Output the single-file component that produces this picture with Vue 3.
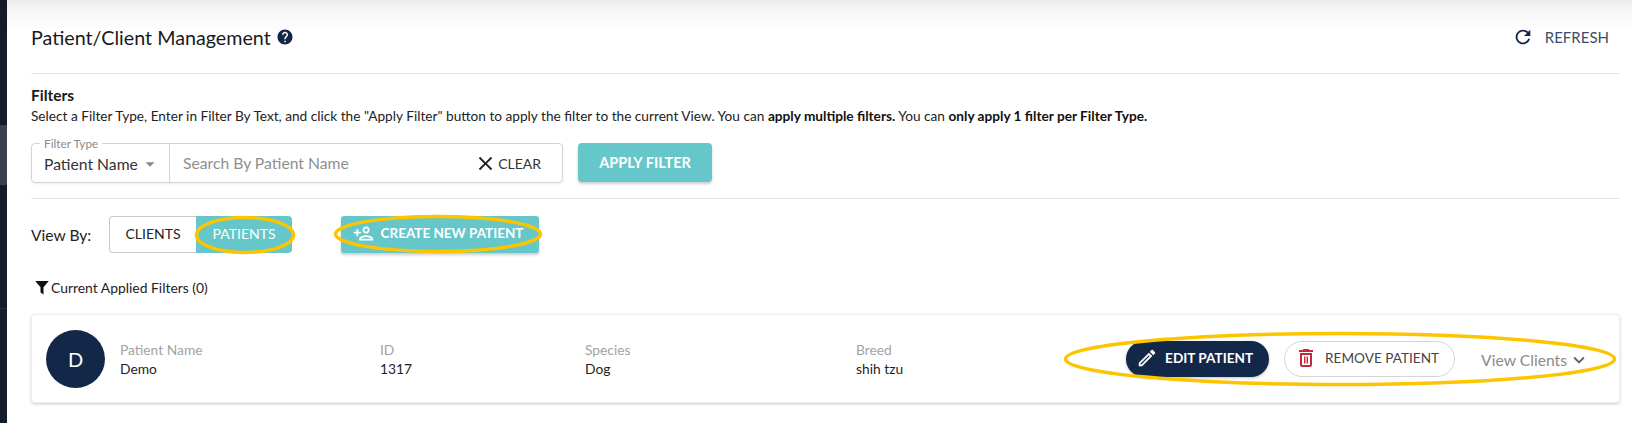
<template>
  <div class="page">
    <div class="sidebar">
      <div class="side-a"></div>
      <div class="side-b"></div>
      <div class="side-c"></div>
      <div class="side-d"></div>
    </div>

    <main class="main">
      <header class="head">
        <div class="title-wrap">
          <h1>Patient/Client Management</h1>
          <svg class="help" viewBox="0 0 24 24"><path :d="icons.help" /></svg>
        </div>
        <button class="refresh">
          <svg viewBox="0 0 24 24"><path :d="icons.refresh" /></svg>
          <span>REFRESH</span>
        </button>
      </header>

      <section class="filters">
        <h2>Filters</h2>
        <p>
          Select a Filter Type, Enter in Filter By Text, and click the "Apply Filter" button to apply the filter to the
          current View. You can <b>apply multiple filters.</b> You can <b>only apply 1 filter per Filter Type.</b>
        </p>
        <div class="filter-row">
          <div class="filter-box">
            <span class="notch">Filter Type</span>
            <div class="select">
              <span>Patient Name</span>
              <svg viewBox="0 0 24 24"><path d="M7 10l5 5 5-5z" /></svg>
            </div>
            <div class="search">
              <span class="placeholder">Search By Patient Name</span>
              <span class="clear">
                <svg viewBox="0 0 24 24"><path :d="icons.close" /></svg>
                CLEAR
              </span>
            </div>
          </div>
          <button class="apply">APPLY FILTER</button>
        </div>
      </section>

      <section class="view-row">
        <span class="view-label">View By:</span>
        <div class="toggle">
          <span class="tab">CLIENTS</span>
          <span class="tab on">
            PATIENTS
            <svg class="ring" viewBox="0 0 100 38" preserveAspectRatio="none"><ellipse cx="50" cy="19" rx="48.5" ry="17.5" /></svg>
          </span>
        </div>
        <button class="create">
          <svg viewBox="0 0 24 24"><path :d="icons.personAdd" /></svg>
          CREATE NEW PATIENT
          <svg class="ring" viewBox="0 0 208 38" preserveAspectRatio="none"><ellipse cx="104" cy="19" rx="102.5" ry="17.5" /></svg>
        </button>
      </section>

      <div class="applied">
        <svg viewBox="0 0 24 24"><path d="M3 4h18l-7 8.2V22l-4-2.6v-7.2z" /></svg>
        <span>Current Applied Filters (0)</span>
      </div>

      <article class="card">
        <div class="avatar">D</div>
        <div v-for="col in columns" :key="col.label" class="col" :style="{ width: col.width + 'px' }">
          <span class="col-label">{{ col.label }}</span>
          <span class="col-value">{{ col.value }}</span>
        </div>
        <div class="actions">
          <button class="edit">
            <svg viewBox="0 0 24 24"><path :d="icons.edit" /></svg>
            EDIT PATIENT
          </button>
          <button class="remove">
            <svg viewBox="0 0 24 24"><path :d="icons.trash" /></svg>
            REMOVE PATIENT
          </button>
          <span class="view-clients">
            View Clients
            <svg viewBox="0 0 24 24"><path :d="icons.chevron" /></svg>
          </span>
          <svg class="ring" viewBox="0 0 552 54" preserveAspectRatio="none"><ellipse cx="276" cy="27" rx="274.5" ry="25.5" /></svg>
        </div>
      </article>
    </main>
  </div>
</template>

<script setup>
const icons = {
  help: "M12 2C6.48 2 2 6.48 2 12s4.48 10 10 10 10-4.48 10-10S17.52 2 12 2zm1 17h-2v-2h2v2zm2.07-7.75l-.9.92C13.45 12.9 13 13.5 13 15h-2v-.5c0-1.1.45-2.1 1.17-2.83l1.24-1.26c.37-.36.59-.86.59-1.41 0-1.1-.9-2-2-2s-2 .9-2 2H8c0-2.21 1.79-4 4-4s4 1.79 4 4c0 .88-.36 1.68-.93 2.25z",
  refresh: "M17.65 6.35C16.2 4.9 14.21 4 12 4c-4.42 0-7.99 3.58-7.99 8s3.57 8 7.99 8c3.73 0 6.84-2.55 7.73-6h-2.08c-.82 2.33-3.04 4-5.65 4-3.31 0-6-2.69-6-6s2.69-6 6-6c1.66 0 3.14.69 4.22 1.78L13 11h7V4l-2.35 2.35z",
  close: "M19 6.41L17.59 5 12 10.59 6.41 5 5 6.41 10.59 12 5 17.59 6.41 19 12 13.41 17.59 19 19 17.59 13.41 12z",
  personAdd: "M15 12c2.21 0 4-1.79 4-4s-1.79-4-4-4-4 1.79-4 4 1.79 4 4 4zm0-6c1.1 0 2 .9 2 2s-.9 2-2 2-2-.9-2-2 .9-2 2-2zm0 8c-2.67 0-8 1.34-8 4v2h16v-2c0-2.66-5.33-4-8-4zm-6 4c.22-.72 3.31-2 6-2 2.7 0 5.8 1.29 6 2H9zm-3-3v-3h3v-2H6V7H4v3H1v2h3v3h2z",
  edit: "M3 17.25V21h3.75L17.81 9.94l-3.75-3.75L3 17.25zM5.92 19H5v-.92l9.06-9.06.92.92L5.92 19zM20.71 5.63l-2.34-2.34c-.2-.2-.45-.29-.71-.29s-.51.1-.7.29l-1.83 1.83 3.75 3.75 1.83-1.83c.39-.39.39-1.02 0-1.41z",
  trash: "M16 9v10H8V9h8m-1.5-6h-5l-1 1H5v2h14V4h-3.5l-1-1zM18 7H6v12c0 1.1.9 2 2 2h8c1.1 0 2-.9 2-2V7zM10 10.5h1.4v7H10zM12.6 10.5H14v7h-1.4z",
  chevron: "M16.59 8.59L12 13.17 7.41 8.59 6 10l6 6 6-6z",
};

const columns = [
  { label: "Patient Name", value: "Demo", width: 260 },
  { label: "ID", value: "1317", width: 205 },
  { label: "Species", value: "Dog", width: 271 },
  { label: "Breed", value: "shih tzu", width: 200 },
];
</script>

<style>
body {
  background: #fff;
}
</style>

<style scoped>
.page {
  display: flex;
  width: 1632px;
  height: 423px;
  overflow: hidden;
  font-family: Lato, "Open Sans", sans-serif;
  color: #1b1b1b;
}
.sidebar {
  width: 7px;
  flex: none;
  display: flex;
  flex-direction: column;
  background: #141c2a;
}
.side-a { height: 125px; }
.side-b { height: 60px; background: #3b414c; }
.side-c { height: 123px; }
.side-d { flex: 1; border-top: 1px solid #2b3240; }

.main {
  flex: 1;
  padding: 0 12px 0 24px;
  background: linear-gradient(#ededee 2px, #f6f6f7 10px, #fff 32px);
}
button {
  font-family: inherit;
  border: none;
  cursor: pointer;
}
.ring {
  position: absolute;
  pointer-events: none;
  fill: none;
  stroke: #fdc500;
  stroke-width: 3.5px;
  overflow: visible;
}
.ring ellipse {
  vector-effect: non-scaling-stroke;
}

.head {
  height: 74px;
  box-sizing: border-box;
  border-bottom: 1px solid #e6e6e6;
  display: flex;
  align-items: center;
  justify-content: space-between;
}
.title-wrap {
  display: flex;
  align-items: center;
  gap: 5px;
  padding-top: 1px;
}
h1 {
  margin: 0;
  font-size: 19.7px;
  font-weight: 400;
  color: #1a1a1a;
}
.help {
  width: 18px;
  height: 18px;
  fill: #132748;
}
.refresh {
  display: flex;
  align-items: center;
  gap: 11px;
  margin-right: 11px;
  padding: 0;
  background: none;
  color: #3d4d6b;
  font-size: 15px;
}
.refresh svg {
  width: 22px;
  height: 22px;
  fill: #132748;
}

.filters {
  height: 125px;
  box-sizing: border-box;
  border-bottom: 1px solid #e6e6e6;
}
h2 {
  margin: 0;
  padding-top: 12px;
  font-size: 15.5px;
  line-height: 18px;
  font-weight: 700;
  color: #1a1a1a;
}
.filters p {
  margin: 4px 0 0;
  font-size: 13.66px;
  line-height: 17px;
  color: #222;
}
.filters p b {
  color: #111;
}
.filter-row {
  display: flex;
  gap: 15px;
  margin-top: 18px;
}
.filter-box {
  position: relative;
  display: flex;
  width: 532px;
  height: 40px;
  box-sizing: border-box;
  border: 1px solid #d4d4d4;
  border-radius: 4px;
  box-shadow: 0 1px 2px rgba(0, 0, 0, 0.08);
}
.notch {
  position: absolute;
  top: -6px;
  left: 8px;
  padding: 0 4px;
  background: #fff;
  font-size: 11.8px;
  line-height: 11px;
  color: #8a8a8a;
}
.select {
  display: flex;
  align-items: center;
  width: 138px;
  box-sizing: border-box;
  padding: 2px 0 0 12px;
  border-right: 1px solid #d4d4d4;
  font-size: 15.7px;
  color: #333;
}
.select svg {
  flex: none;
  width: 22px;
  height: 22px;
  margin-left: 1px;
  fill: #8a8a8a;
}
.search {
  flex: 1;
  display: flex;
  align-items: center;
  justify-content: space-between;
  padding: 0 21px 0 13px;
  font-size: 15.7px;
}
.placeholder {
  color: #8f8f8f;
}
.clear {
  display: flex;
  align-items: center;
  gap: 1px;
  font-size: 14px;
  color: #333;
}
.clear svg {
  width: 23px;
  height: 23px;
  fill: #222;
}
.apply {
  width: 134px;
  height: 39px;
  border-radius: 4px;
  background: #65c7ca;
  color: #fff;
  font-size: 14.5px;
  font-weight: 700;
  box-shadow: 0 2px 3px rgba(0, 0, 0, 0.2);
}

.view-row {
  display: flex;
  align-items: center;
  height: 37px;
  margin-top: 17px;
}
.view-label {
  width: 78px;
  font-size: 15.6px;
  color: #222;
}
.toggle {
  display: flex;
  width: 183px;
  height: 37px;
  box-sizing: border-box;
  border-radius: 4px;
}
.tab {
  position: relative;
  display: flex;
  align-items: center;
  justify-content: center;
  padding-bottom: 3px;
  box-sizing: border-box;
  font-size: 14px;
}
.tab:first-child {
  width: 87px;
  border: 1px solid #c9c9c9;
  border-right: none;
  border-radius: 4px 0 0 4px;
  color: #222;
}
.tab.on {
  flex: 1;
  background: #65c7ca;
  color: #fff;
  border-radius: 0 4px 4px 0;
}
.tab .ring {
  top: 0;
  left: -1px;
  width: 100px;
  height: 38px;
}
.create {
  position: relative;
  display: flex;
  align-items: center;
  justify-content: center;
  gap: 7px;
  width: 198px;
  height: 37px;
  margin-left: 49px;
  padding: 0 4px 3px 0;
  border-radius: 3px;
  background: #65c7ca;
  color: #fff;
  font-size: 13.5px;
  font-weight: 700;
  box-shadow: 0 2px 3px rgba(0, 0, 0, 0.2);
}
.create svg:first-child {
  width: 21px;
  height: 21px;
  fill: #fff;
}
.create .ring {
  top: -1px;
  left: -7px;
  width: 208px;
  height: 38px;
}

.applied {
  display: flex;
  align-items: center;
  gap: 0;
  height: 20px;
  margin-top: 24px;
  padding-left: 2px;
  font-size: 13.9px;
  color: #222;
}
.applied svg {
  width: 18px;
  height: 18px;
  fill: #111;
}

.card {
  display: flex;
  align-items: center;
  width: 1589px;
  height: 89px;
  margin-top: 17px;
  padding-left: 14px;
  box-sizing: border-box;
  border: 1px solid #efefef;
  border-radius: 4px;
  box-shadow: 0 1px 3px rgba(0, 0, 0, 0.22);
}
.avatar {
  flex: none;
  display: flex;
  align-items: center;
  justify-content: center;
  width: 59px;
  height: 58px;
  margin-right: 15px;
  border-radius: 50%;
  background: #132748;
  color: #fff;
  font-size: 20px;
}
.col {
  flex: none;
  display: flex;
  flex-direction: column;
  gap: 2px;
  font-size: 13.8px;
  line-height: 17px;
}
.col-label {
  color: #a3a3a3;
}
.col-value {
  color: #1f1f1f;
}
.actions {
  position: relative;
  display: flex;
  align-items: center;
  margin-left: auto;
  margin-right: 29px;
}
.actions > .ring {
  top: -9px;
  left: -62px;
  width: 552px;
  height: 54px;
}
.edit {
  display: flex;
  align-items: center;
  gap: 7px;
  width: 143px;
  height: 36px;
  box-sizing: border-box;
  padding: 0 0 1px 10px;
  border-radius: 18px;
  background: #132748;
  color: #fff;
  font-size: 13.6px;
  font-weight: 700;
  box-shadow: 0 1px 3px rgba(0, 0, 0, 0.25);
}
.edit svg {
  width: 22px;
  height: 22px;
  fill: #fff;
}
.remove {
  display: flex;
  align-items: center;
  gap: 7px;
  width: 171px;
  height: 36px;
  margin-left: 15px;
  box-sizing: border-box;
  padding: 0 0 1px 9px;
  border: 1px solid #d5d5d5;
  border-radius: 18px;
  background: #fff;
  color: #444;
  font-size: 13.6px;
  font-weight: 400;
}
.remove svg {
  width: 24px;
  height: 24px;
  fill: #c8293a;
}
.view-clients {
  display: flex;
  align-items: center;
  gap: 1px;
  margin-left: 26px;
  padding-top: 2px;
  font-size: 15.7px;
  color: #8a8a8a;
}
.view-clients svg {
  width: 22px;
  height: 22px;
  fill: #666;
}
</style>
